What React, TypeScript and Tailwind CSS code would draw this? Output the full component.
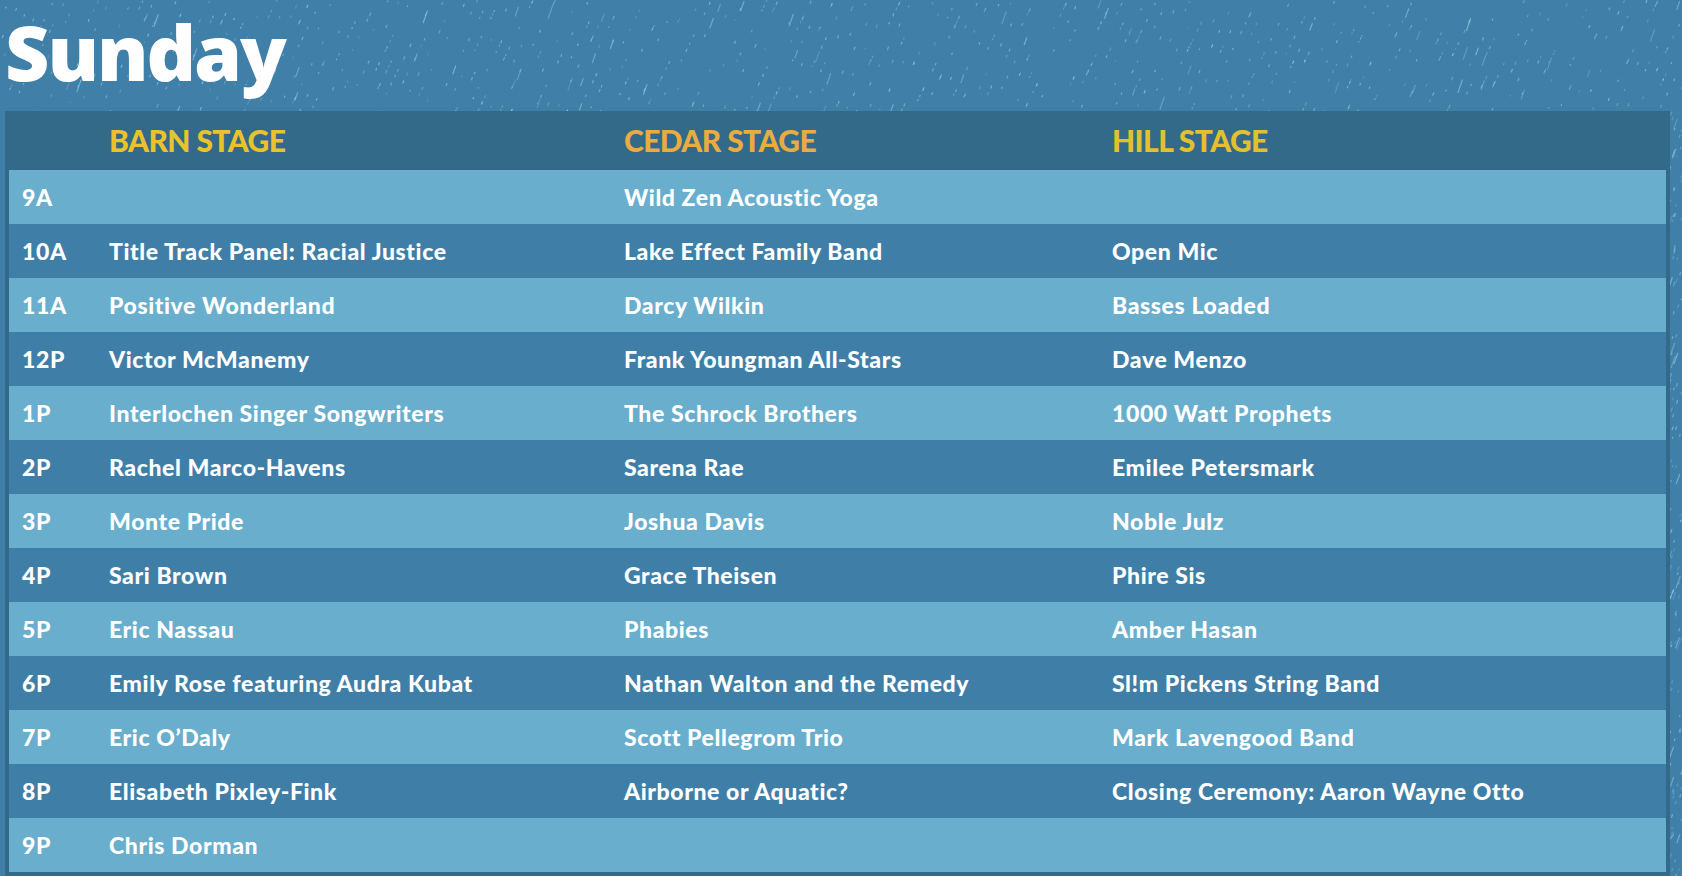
import React from 'react'

type Slot = { time: string; barn: string; cedar: string; hill: string }

const schedule: Slot[] = [
  { time: '9A', barn: '', cedar: 'Wild Zen Acoustic Yoga', hill: '' },
  { time: '10A', barn: 'Title Track Panel: Racial Justice', cedar: 'Lake Effect Family Band', hill: 'Open Mic' },
  { time: '11A', barn: 'Positive Wonderland', cedar: 'Darcy Wilkin', hill: 'Basses Loaded' },
  { time: '12P', barn: 'Victor McManemy', cedar: 'Frank Youngman All-Stars', hill: 'Dave Menzo' },
  { time: '1P', barn: 'Interlochen Singer Songwriters', cedar: 'The Schrock Brothers', hill: '1000 Watt Prophets' },
  { time: '2P', barn: 'Rachel Marco-Havens', cedar: 'Sarena Rae', hill: 'Emilee Petersmark' },
  { time: '3P', barn: 'Monte Pride', cedar: 'Joshua Davis', hill: 'Noble Julz' },
  { time: '4P', barn: 'Sari Brown', cedar: 'Grace Theisen', hill: 'Phire Sis' },
  { time: '5P', barn: 'Eric Nassau', cedar: 'Phabies', hill: 'Amber Hasan' },
  { time: '6P', barn: 'Emily Rose featuring Audra Kubat', cedar: 'Nathan Walton and the Remedy', hill: 'Sl!m Pickens String Band' },
  { time: '7P', barn: 'Eric O’Daly', cedar: 'Scott Pellegrom Trio', hill: 'Mark Lavengood Band' },
  { time: '8P', barn: 'Elisabeth Pixley-Fink', cedar: 'Airborne or Aquatic?', hill: 'Closing Ceremony: Aaron Wayne Otto' },
  { time: '9P', barn: 'Chris Dorman', cedar: '', hill: '' },
]

// little rain streaks in the backdrop (only the top band and the right edge show)
const drops = (() => {
  let seed = 7
  const rnd = () => {
    seed = (seed * 9301 + 49297) % 233280
    return seed / 233280
  }
  const out: { x: number; y: number; l: number; o: number }[] = []
  for (let i = 0; i < 900; i++) {
    const x = rnd() * 1682
    const y = rnd() * 112
    const l = rnd() < 0.07 ? 6 + rnd() * 7 : 0.6 + rnd() * 2
    out.push({ x, y, l, o: 0.2 + rnd() * 0.35 })
  }
  for (let i = 0; i < 120; i++) {
    const x = 1670 + rnd() * 12
    const y = 110 + rnd() * 766
    const l = rnd() < 0.15 ? 6 + rnd() * 6 : 1 + rnd() * 2
    out.push({ x, y, l, o: 0.2 + rnd() * 0.35 })
  }
  return out
})()

const Rain: React.FC = () => (
  <svg className="absolute inset-0 h-full w-full" width="1682" height="876">
    {drops.map((d, i) => (
      <line
        key={i}
        x1={d.x}
        y1={d.y}
        x2={d.x - d.l * 0.35}
        y2={d.y + d.l}
        stroke="#a9d6f0"
        strokeOpacity={d.o}
        strokeWidth={1.3}
        strokeLinecap="round"
      />
    ))}
  </svg>
)

const cols = 'grid grid-cols-[100px_515px_488px_1fr] items-center'

export default function App() {
  return (
    <div className="relative h-[876px] w-[1682px] overflow-hidden bg-[#3f7fa8] font-['Lato',sans-serif]">
      <Rain />
      <div className="relative flex flex-col pl-[5px]">
        <div className="h-[111px] pt-[8px] font-['Open_Sans',sans-serif] text-[77px] font-extrabold leading-[88px] tracking-[-2px] text-white">
          Sunday
        </div>
        <div className="w-[1665px] bg-[#336a8a] px-[4px] pb-[4px]">
          <div className={`${cols} h-[59px] text-[30px] font-black uppercase tracking-[-0.6px]`}>
            <div />
            <div className="text-[#e9c22c]">Barn Stage</div>
            <div className="text-[#e8ac40]">Cedar Stage</div>
            <div className="text-[#e3c02e]">Hill Stage</div>
          </div>
          {schedule.map((slot, index) => (
            <div
              key={index}
              className={`${cols} h-[54px] text-[23px] font-black tracking-[0.6px] text-white ${
                index % 2 === 0 ? 'bg-[#6aaecd]' : 'bg-[#3f7fa7]'
              }`}
            >
              <div className="pl-[13px]">{slot.time}</div>
              <div>{slot.barn}</div>
              <div>{slot.cedar}</div>
              <div>{slot.hill}</div>
            </div>
          ))}
        </div>
      </div>
    </div>
  )
}
